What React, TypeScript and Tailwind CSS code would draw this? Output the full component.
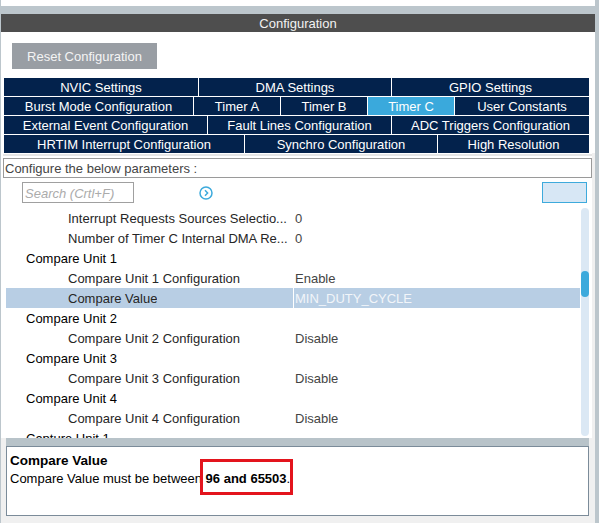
import React from "react";

const FONT = "font-['Liberation_Sans',Arial,sans-serif]";

const tabRows = [
  [
    { label: "NVIC Settings", w: "w-[194px]" },
    { label: "DMA Settings", w: "w-[192px]" },
    { label: "GPIO Settings", w: "flex-1" },
  ],
  [
    { label: "Burst Mode Configuration", w: "w-[189px]" },
    { label: "Timer A", w: "w-[86px]" },
    { label: "Timer B", w: "w-[86px]" },
    { label: "Timer C", w: "w-[86px]", active: true },
    { label: "User Constants", w: "flex-1" },
  ],
  [
    { label: "External Event Configuration", w: "w-[203px]" },
    { label: "Fault Lines Configuration", w: "w-[183px]" },
    { label: "ADC Triggers Configuration", w: "flex-1" },
  ],
  [
    { label: "HRTIM Interrupt Configuration", w: "w-[240px]" },
    { label: "Synchro Configuration", w: "w-[192px]" },
    { label: "High Resolution", w: "flex-1" },
  ],
];

type Param = { label: string; value?: string; child?: boolean; selected?: boolean };

const params: Param[] = [
  { label: "Interrupt Requests Sources Selectio...", value: "0", child: true },
  { label: "Number of Timer C Internal DMA Re...", value: "0", child: true },
  { label: "Compare Unit 1" },
  { label: "Compare Unit 1 Configuration", value: "Enable", child: true },
  { label: "Compare Value", value: "MIN_DUTY_CYCLE", child: true, selected: true },
  { label: "Compare Unit 2" },
  { label: "Compare Unit 2 Configuration", value: "Disable", child: true },
  { label: "Compare Unit 3" },
  { label: "Compare Unit 3 Configuration", value: "Disable", child: true },
  { label: "Compare Unit 4" },
  { label: "Compare Unit 4 Configuration", value: "Disable", child: true },
  { label: "Capture Unit 1" },
];

function ParamRow({ p }: { p: Param }) {
  return (
    <div className={`flex h-[20px] shrink-0 ${p.selected ? "bg-[#b8cee4]" : ""}`}>
      <div
        className={`flex w-[287px] items-center pt-[2px] ${p.child ? "pl-[62px] text-[#262626]" : "pl-[20px] text-black"}`}
      >
        <span className="truncate">{p.label}</span>
      </div>
      <div className={`w-[1px] ${p.selected ? "bg-white" : ""}`} />
      <div
        className={`flex flex-1 items-center pl-[1px] pt-[2px] ${p.selected ? "text-[#f2f5f9]" : "text-[#444]"}`}
      >
        {p.value}
      </div>
    </div>
  );
}

export default function App() {
  return (
    <div className={`${FONT} flex h-[523px] w-[599px] flex-col overflow-hidden bg-[#bcc6cc] text-[13px]`}>
      {/* strip of the panel above */}
      <div className="ml-[1px] h-[6px] w-[594px] shrink-0 bg-white" />

      <div className="ml-[1px] mt-[8px] flex w-[594px] flex-1 flex-col bg-white">
        <div className="flex h-[18px] shrink-0 items-center justify-center bg-[#4e4e4e] pt-[2px] text-[#f2f2f2]">
          Configuration
        </div>

        <div className="ml-[11px] mt-[11px] flex h-[26px] w-[145px] items-center justify-center bg-[#999ea4] pt-[2px] text-[#f4f4f4]">
          Reset Configuration
        </div>

        <div className="ml-[3px] mt-[9px] flex w-[585px] flex-col gap-[1px]">
          {tabRows.map((row, i) => (
            <div key={i} className="flex h-[18px] gap-[1px]">
              {row.map((t) => (
                <div
                  key={t.label}
                  className={`${t.w} flex items-center justify-center whitespace-nowrap pt-[2px] text-white ${
                    "active" in t && t.active ? "bg-[#3aa9dc]" : "bg-[#03224c]"
                  }`}
                >
                  {t.label}
                </div>
              ))}
            </div>
          ))}
        </div>

        <div className="flex flex-1 flex-col bg-[#f0f0f0]">
          <div className="flex w-[591px] flex-col bg-white pl-[2px] pt-[1px]">
            <div className="h-[2px] bg-[#e6e6e6]" />
            <div className="mt-[2px] flex h-[20px] w-[589px] items-center border border-[#9a9a9a] pl-[1px] pt-[2px] text-[#444]">
              Configure the below parameters :
            </div>

            <div className="mt-[4px] flex h-[21px] items-center">
              <div className="ml-[19px] flex h-[21px] w-[112px] items-center border border-[#a0a0a0] pl-[2px] pt-[2px] italic text-[#ababab]">
                Search (Crtl+F)
              </div>
              <svg className="ml-[65px]" width="14" height="14" viewBox="0 0 14 14" fill="none">
                <circle cx="7" cy="7" r="6" stroke="#3daadc" strokeWidth="1.5" />
                <path d="M6 4.3 L8.6 7 L6 9.7" stroke="#3daadc" strokeWidth="1.5" />
              </svg>
              <div className="ml-[329px] h-[21px] w-[45px] border border-[#3daadc] bg-[#d7e7f5]" />
            </div>

            <div className="mt-[5px] flex h-[230px] overflow-hidden">
              <div className="ml-[3px] flex w-[574px] flex-col">
                {params.map((p) => (
                  <ParamRow key={p.label} p={p} />
                ))}
              </div>
              <div className="ml-[1px] flex h-[228px] w-[8px] flex-col rounded-full bg-[#dbe8f4]">
                <div className="mt-[63px] h-[26px] rounded-full bg-[#3daadc]" />
              </div>
            </div>
          </div>

          <div className="ml-[5px] h-[8px] w-[583px] bg-[#b8c3c9]" />
          <div className="ml-[5px] h-[70px] w-[583px] border border-[#7b8b99] bg-white pl-[3px] pt-[5px] leading-[18px] text-black">
            <div className="text-[13.5px] font-bold">Compare Value</div>
            <div>
              Compare Value must be between{" "}
              <span className="relative">
                <b>96 and 65503</b>.
                <span className="absolute -bottom-[9px] -left-[6px] -right-[3px] -top-[12px] border-[3px] border-[#e3141d]" />
              </span>
            </div>
          </div>
        </div>
      </div>
    </div>
  );
}
